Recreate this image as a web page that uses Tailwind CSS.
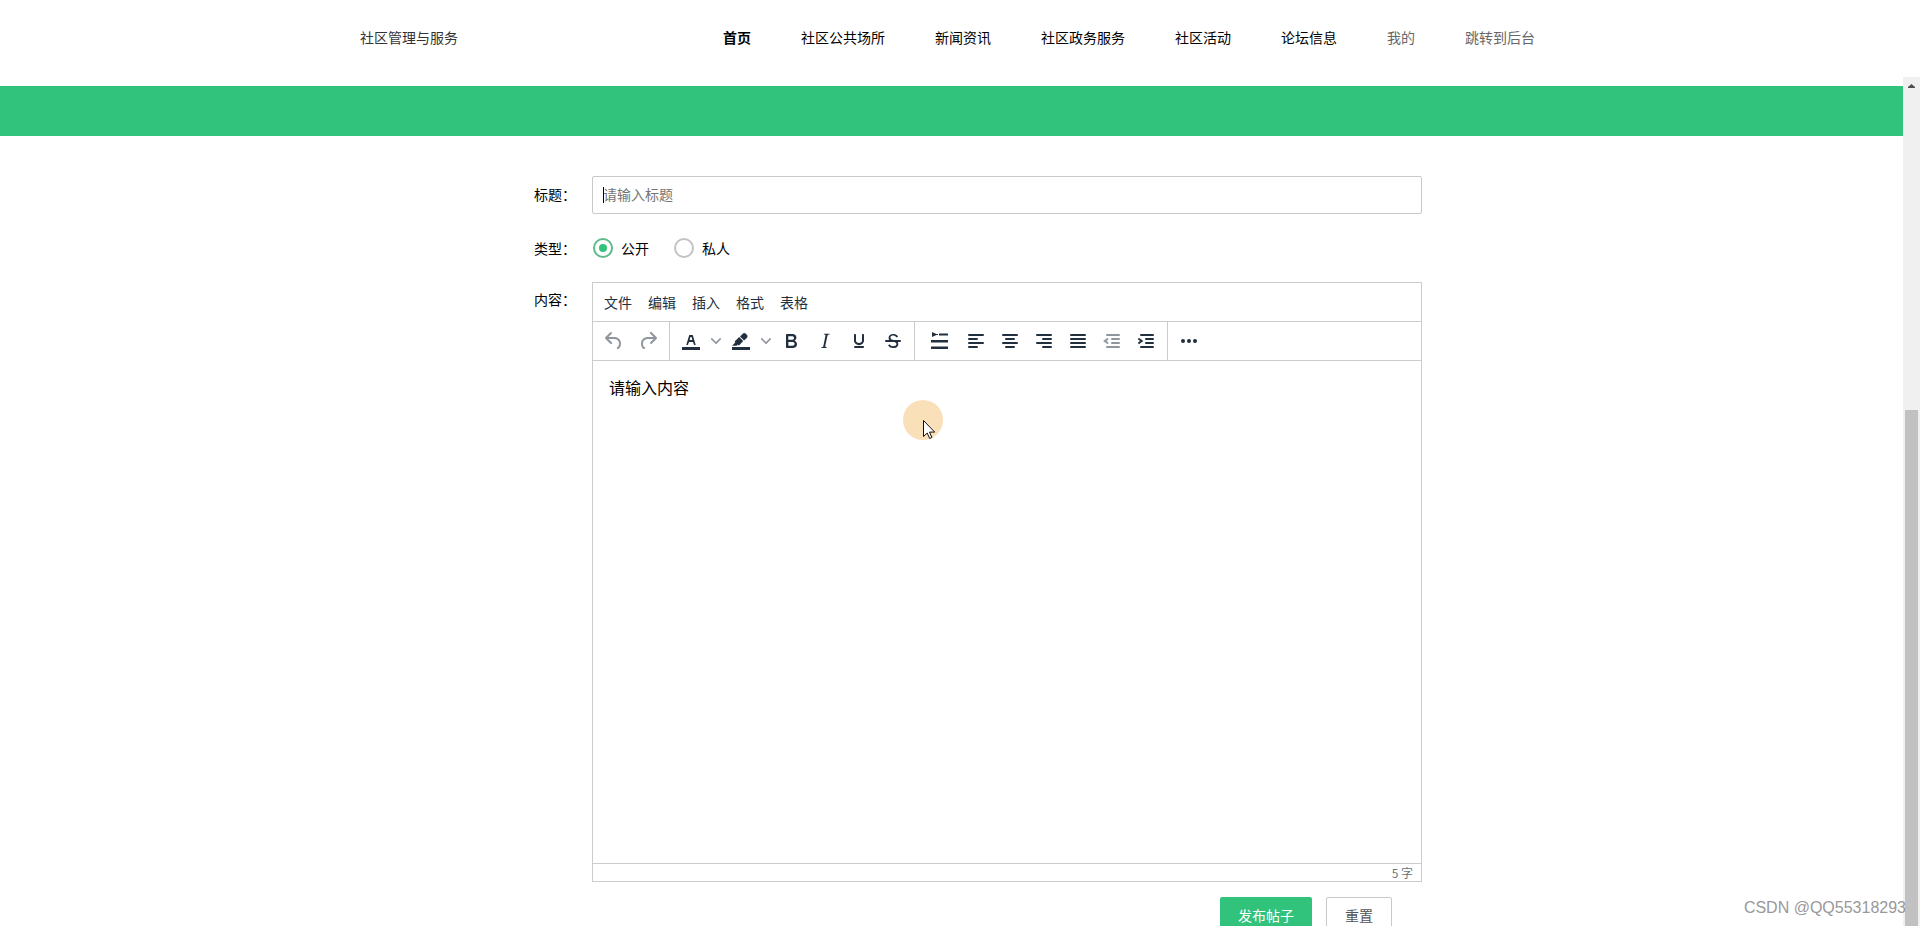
<!DOCTYPE html>
<html lang="zh-CN">
<head>
<meta charset="utf-8">
<title>社区管理与服务</title>
<script src="https://cdn.jsdelivr.net/npm/@tailwindcss/browser@4"></script>
</head>
<body class="relative flex h-screen flex-col overflow-hidden bg-white font-['Noto_Sans_CJK_SC',sans-serif] text-sm text-black">

<header class="h-[77px] shrink-0">
  <div class="mx-auto flex h-[74px] max-w-[1200px] items-center justify-between">
    <a href="#" class="text-[#333]">社区管理与服务</a>
    <nav class="flex gap-[50px] pr-[25px] whitespace-nowrap">
      <a href="#" class="font-bold">首页</a>
      <a href="#">社区公共场所</a>
      <a href="#">新闻资讯</a>
      <a href="#">社区政务服务</a>
      <a href="#">社区活动</a>
      <a href="#">论坛信息</a>
      <a href="#" class="text-[#666]">我的</a>
      <a href="#" class="text-[#666]">跳转到后台</a>
    </nav>
  </div>
</header>

<div class="flex min-h-0 flex-1">
  <main class="min-w-0 flex-1 overflow-hidden pt-[9px]">
    <div class="h-[50px] bg-[#31c27c]"></div>

    <form class="pt-10 pl-[53px]">
      <div class="mx-auto max-w-[888px]">
        <div class="flex items-center">
          <label for="title" class="w-[58px] shrink-0 pb-[2px]">标题：</label>
          <div class="relative flex-1">
            <input id="title" type="text" placeholder="请输入标题" class="h-[38px] w-full rounded-xs border border-[#c9c9c9] px-[10px] pb-[2px] outline-none placeholder:text-[#757575]">
            <span class="absolute top-[11px] left-[11px] h-4 w-px bg-black"></span>
          </div>
        </div>

        <div class="mt-[15px] flex h-[38px] items-center">
          <span id="kind" class="w-[58px] shrink-0">类型：</span>
          <div role="radiogroup" aria-labelledby="kind" class="flex gap-[25px] pl-px">
            <label class="flex items-center gap-2"><input type="radio" name="kind" checked class="grid size-5 appearance-none place-items-center rounded-full border-2 border-[#c2c2c2] before:size-2 before:rounded-full checked:border-[#5fba8b] checked:before:bg-[#31c27c]">公开</label>
            <label class="flex items-center gap-2"><input type="radio" name="kind" class="grid size-5 appearance-none place-items-center rounded-full border-2 border-[#c2c2c2] before:size-2 before:rounded-full checked:border-[#5fba8b] checked:before:bg-[#31c27c]">私人</label>
          </div>
        </div>

        <div class="mt-[15px] flex">
          <label for="content" class="w-[58px] shrink-0 pt-[7px]">内容：</label>
          <div class="flex h-[600px] flex-1 flex-col border border-[#ccc] text-[#222f3e]">
            <div class="flex h-[39px] shrink-0 items-center gap-4 border-b border-[#ccc] px-[11px]">
              <button type="button">文件</button>
              <button type="button">编辑</button>
              <button type="button">插入</button>
              <button type="button">格式</button>
              <button type="button">表格</button>
            </div>

            <div class="flex h-[39px] shrink-0 border-b border-[#ccc]">
              <div class="flex items-center border-r border-[#ccc] px-1">
                <button type="button" disabled aria-label="撤销" class="flex w-[34px] justify-center opacity-50"><svg class="size-6" viewBox="0 0 24 24" fill="currentColor"><path d="M6.4 8H12c3.7 0 6.2 2 6.8 5.1.6 2.7-.4 5.6-2.3 6.8a1 1 0 0 1-1-1.8c1.1-.6 1.8-2.7 1.4-4.6-.5-2.1-2.1-3.5-4.9-3.5H6.4l3.3 3.3a1 1 0 1 1-1.4 1.4l-5-5a1 1 0 0 1 0-1.4l5-5a1 1 0 0 1 1.4 1.4L6.4 8z"/></svg></button>
                <button type="button" disabled aria-label="重做" class="flex w-[34px] justify-center opacity-50"><svg class="size-6" viewBox="0 0 24 24" fill="currentColor"><path d="M17.6 10H12c-2.8 0-4.4 1.4-4.9 3.5-.4 2 .3 4 1.4 4.6a1 1 0 1 1-1 1.8c-2-1.2-2.9-4.1-2.3-6.8.6-3 3-5.1 6.8-5.1h5.6l-3.3-3.3a1 1 0 1 1 1.4-1.4l5 5a1 1 0 0 1 0 1.4l-5 5a1 1 0 0 1-1.4-1.4l3.3-3.3z"/></svg></button>
              </div>

              <div class="flex items-center border-r border-[#ccc] px-1">
                <button type="button" aria-label="文字颜色" class="flex w-[34px] justify-center"><svg class="size-6" viewBox="0 0 24 24" fill="currentColor"><path d="M3 18h18v3H3z"/><path d="M8.7 16h-.8a.5.5 0 0 1-.5-.6l2.7-9c.1-.3.3-.4.5-.4h2.8c.2 0 .4.1.5.4l2.7 9a.5.5 0 0 1-.5.6h-.8a.5.5 0 0 1-.4-.4l-.7-2.2c0-.3-.3-.4-.5-.4h-3.4c-.2 0-.4.1-.5.4l-.7 2.2c0 .3-.2.4-.4.4zm2.6-7.6l-.6 2a.5.5 0 0 0 .5.6h1.6a.5.5 0 0 0 .5-.6l-.6-2c0-.3-.3-.4-.5-.4h-.4c-.2 0-.4.1-.5.4z"/></svg></button>
                <button type="button" aria-label="选择文字颜色" class="flex w-4 justify-center opacity-50"><svg class="size-[10px]" viewBox="0 0 10 10" fill="currentColor"><path d="M8.7 2.2c.3-.3.8-.3 1 0 .4.4.4.9 0 1.2L5.7 7.8c-.3.3-.9.3-1.2 0L.2 3.4a.8.8 0 0 1 0-1.2c.3-.3.8-.3 1.1 0L5 6l3.7-3.8z"/></svg></button>
                <button type="button" aria-label="背景颜色" class="flex w-[34px] justify-center"><svg class="size-6" viewBox="0 0 24 24" fill="currentColor"><path d="M3 18h18v3H3z"/><path d="M7.7 16.7H3l3.3-3.3-.7-.8L10.2 8l4 4.1-4 4.2c-.2.2-.6.2-.8 0l-.6-.7-1.1 1.1zm5-7.5L11 7.4l3-2.9a2 2 0 0 1 2.6 0L18 6c.7.7.7 2 0 2.7l-2.9 2.9-1.8-1.8-.5-.6"/></svg></button>
                <button type="button" aria-label="选择背景颜色" class="flex w-4 justify-center opacity-50"><svg class="size-[10px]" viewBox="0 0 10 10" fill="currentColor"><path d="M8.7 2.2c.3-.3.8-.3 1 0 .4.4.4.9 0 1.2L5.7 7.8c-.3.3-.9.3-1.2 0L.2 3.4a.8.8 0 0 1 0-1.2c.3-.3.8-.3 1.1 0L5 6l3.7-3.8z"/></svg></button>
                <button type="button" aria-label="粗体" class="flex w-[34px] justify-center"><svg class="size-6" viewBox="0 0 24 24" fill="currentColor"><path d="M7.8 19c-.3 0-.5 0-.6-.2l-.2-.5V5.7c0-.2 0-.4.2-.5l.6-.2h5c1.5 0 2.7.3 3.5 1 .7.6 1.1 1.4 1.1 2.5a3 3 0 0 1-.6 1.9c-.4.6-1 1-1.6 1.2.4.1.9.3 1.3.6s.8.7 1 1.2c.4.4.5 1 .5 1.6 0 1.3-.4 2.3-1.3 3-.8.7-2.1 1-3.8 1H7.8zm5-8.3c.6 0 1.2-.1 1.6-.5.4-.3.6-.7.6-1.3 0-1.1-.8-1.7-2.3-1.7H9.3v3.5h3.4zm.5 6c.7 0 1.3-.1 1.7-.4.4-.4.6-.9.6-1.5s-.2-1-.7-1.4c-.4-.3-1-.4-2-.4H9.4v3.8h4z"/></svg></button>
                <button type="button" aria-label="斜体" class="flex w-[34px] justify-center"><svg class="size-6" viewBox="0 0 24 24" fill="currentColor"><path d="M16.7 4.7l-.1.9h-.3c-.6 0-1 0-1.4.3-.3.3-.4.6-.5 1.1l-2.1 9.8v.6c0 .5.4.8 1.4.8h.2l-.2.8H8l.2-.8h.2c1.1 0 1.8-.5 2-1.5l2-9.8.1-.5c0-.6-.4-.8-1.4-.8h-.3l.2-.9h5.8z"/></svg></button>
                <button type="button" aria-label="下划线" class="flex w-[34px] justify-center"><svg class="size-6" viewBox="0 0 24 24" fill="currentColor"><path d="M16 5c.6 0 1 .4 1 1v5.5a4 4 0 0 1-.4 1.8l-1 1.4a5.3 5.3 0 0 1-5.5 1 5 5 0 0 1-1.6-1c-.5-.4-.8-.9-1.1-1.4a4 4 0 0 1-.4-1.8V6c0-.6.4-1 1-1s1 .4 1 1v5.5c0 .3 0 .6.2 1l.6.7a3.3 3.3 0 0 0 2.2.8 3.4 3.4 0 0 0 2.2-.8c.3-.2.4-.5.6-.8l.2-.9V6c0-.6.4-1 1-1zM8 17h8c.6 0 1 .4 1 1s-.4 1-1 1H8a1 1 0 0 1 0-2z"/></svg></button>
                <button type="button" aria-label="删除线" class="flex w-[34px] justify-center"><svg class="size-6" viewBox="0 0 24 24" fill="currentColor"><path d="M15.6 8.5c-.5-.7-1-1.1-1.3-1.3-.6-.4-1.3-.6-2-.6-2.7 0-2.8 1.7-2.8 2.1 0 1.6 1.8 2 3.2 2.3 4.4.9 4.6 2.8 4.6 3.9 0 1.4-.7 4.1-5 4.1A6.2 6.2 0 0 1 7 16.4l1.5-1.1c.4.6 1.6 2 3.7 2 1.6 0 2.5-.4 3-1.2.4-.8.3-2-.8-2.6-.7-.4-1.6-.7-2.9-1-1-.2-3.9-.8-3.9-3.6C7.6 6 10.3 5 12.4 5c2.9 0 4.2 1.6 4.7 2.4l-1.5 1.1z"/><path d="M5 11h14a1 1 0 0 1 0 2H5a1 1 0 0 1 0-2z"/></svg></button>
              </div>

              <div class="flex items-center border-r border-[#ccc] px-1">
                <button type="button" aria-label="首行缩进" class="flex w-10 justify-center"><svg class="size-6" viewBox="0 0 24 24" fill="currentColor"><path d="M5 3l5.500 2.500L5 8zM9 5h2v1H9zM12 4.500h9v2h-9zM4 11h17v2.500H4zM4 17.500h17V20H4z"/></svg></button>
                <button type="button" aria-label="左对齐" class="flex w-[34px] justify-center"><svg class="size-6" viewBox="0 0 24 24" stroke="currentColor" stroke-width="2" stroke-linecap="round"><path d="M5 6h14M5 10h8M5 14h14M5 18h8"/></svg></button>
                <button type="button" aria-label="居中对齐" class="flex w-[34px] justify-center"><svg class="size-6" viewBox="0 0 24 24" stroke="currentColor" stroke-width="2" stroke-linecap="round"><path d="M5 6h14M8 10h8M5 14h14M8 18h8"/></svg></button>
                <button type="button" aria-label="右对齐" class="flex w-[34px] justify-center"><svg class="size-6" viewBox="0 0 24 24" stroke="currentColor" stroke-width="2" stroke-linecap="round"><path d="M5 6h14M11 10h8M5 14h14M11 18h8"/></svg></button>
                <button type="button" aria-label="两端对齐" class="flex w-[34px] justify-center"><svg class="size-6" viewBox="0 0 24 24" stroke="currentColor" stroke-width="2" stroke-linecap="round"><path d="M5 6h14M5 10h14M5 14h14M5 18h14"/></svg></button>
                <button type="button" disabled aria-label="减少缩进" class="flex w-[34px] justify-center opacity-50"><svg class="size-6" viewBox="0 0 24 24" fill="none" stroke="currentColor" stroke-width="2" stroke-linecap="round"><path d="M7 6h12M12 10h7M12 14h7M7 18h12M7.500 10L4.800 12l2.700 2"/></svg></button>
                <button type="button" aria-label="增加缩进" class="flex w-[34px] justify-center"><svg class="size-6" viewBox="0 0 24 24" fill="none" stroke="currentColor" stroke-width="2" stroke-linecap="round"><path d="M7 6h12M12 10h7M12 14h7M7 18h12M5 10l2.700 2L5 14"/></svg></button>
              </div>

              <div class="flex items-center px-1">
                <button type="button" aria-label="更多" class="flex w-[34px] justify-center"><svg class="size-6" viewBox="0 0 24 24" fill="currentColor"><circle cx="6" cy="12" r="2"/><circle cx="12" cy="12" r="2"/><circle cx="18" cy="12" r="2"/></svg></button>
              </div>
            </div>

            <textarea id="content" class="min-h-0 flex-1 resize-none px-4 py-[14px] text-base text-black outline-none">请输入内容</textarea>

            <div class="flex h-[18px] shrink-0 items-center justify-end border-t border-[#ccc] px-2 text-xs text-[#222f3e]/70">5 字</div>
          </div>
        </div>

        <div class="mt-[15px] flex justify-end gap-[14px] pr-[30px]">
          <button type="submit" class="h-[38px] rounded-xs bg-[#31c27c] px-[18px] pb-[2px] text-white">发布帖子</button>
          <button type="reset" class="h-[38px] rounded-xs border border-[#c9c9c9] px-[18px] pb-[2px] text-[#555]">重置</button>
        </div>
      </div>
    </form>
  </main>

  <div class="flex w-[17px] shrink-0 flex-col items-center bg-[#f0f0f0]" aria-hidden="true">
    <svg class="h-[17px] w-[17px] shrink-0" viewBox="0 0 17 17" fill="#505050"><path d="M5 11h7v-1L8.500 7 5 10z"/></svg>
    <div class="mt-[316px] w-[13px] flex-1 bg-[#c1c1c1]"></div>
  </div>
</div>

<!-- Pointer with its highlight -->
<div class="pointer-events-none absolute top-[400px] left-[903px] size-10 rounded-full bg-[#fae0b8]">
  <svg class="absolute top-5 left-5 h-5 w-[13px]" viewBox="0 0 13 20" fill="#fff" stroke="#111" stroke-linejoin="round"><path d="M.5.5v16l3.700-3.500 2.500 5.500 2.200-1-2.400-5.400h5.200z"/></svg>
</div>

<p class="pointer-events-none absolute right-[14px] bottom-[6px] font-['Liberation_Sans',sans-serif] text-base text-[#999]">CSDN @QQ55318293</p>
</body>
</html>
